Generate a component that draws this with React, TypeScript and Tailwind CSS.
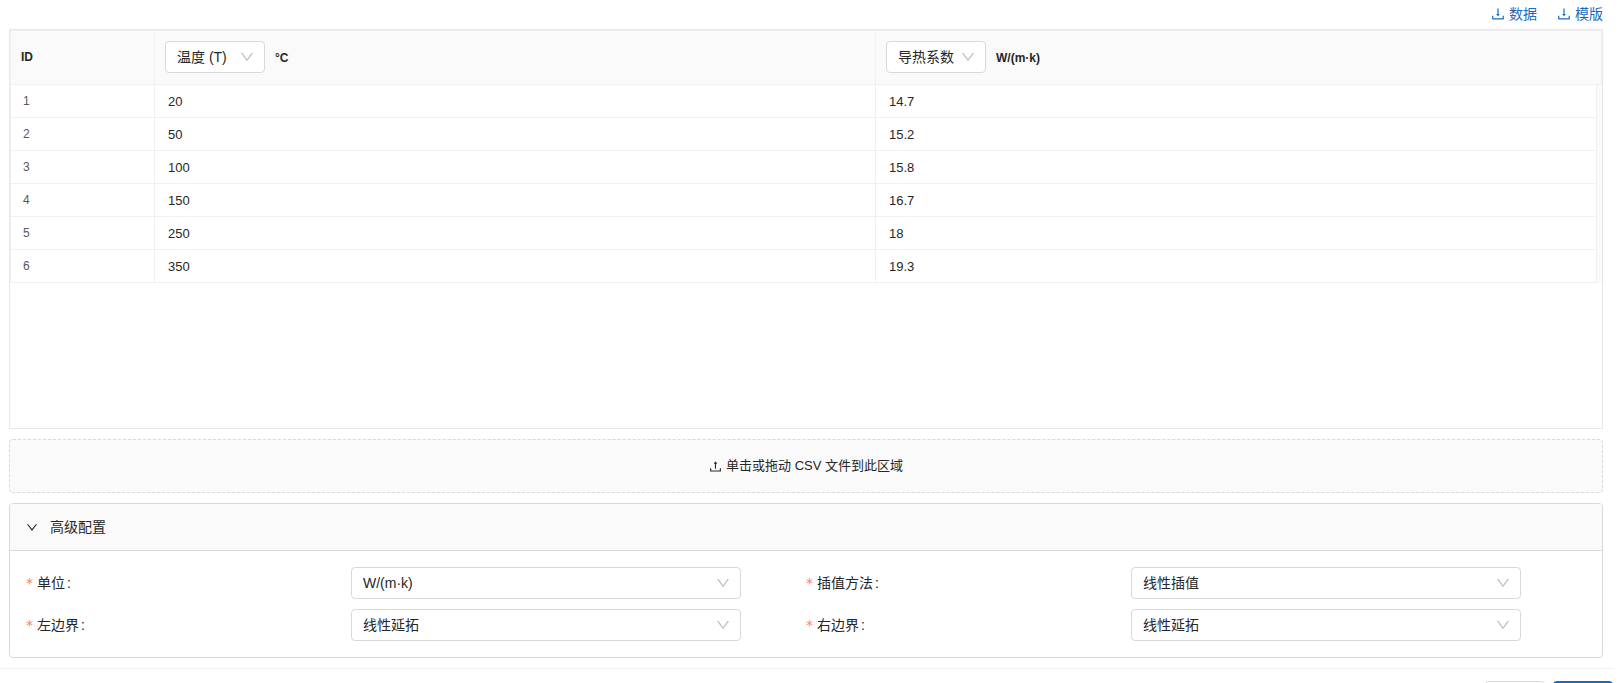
import { useState } from "react";

const DOWN =
  "M884 256h-75c-5.1 0-9.9 2.5-12.9 6.6L512 654.2 227.9 262.6c-3-4.1-7.8-6.6-12.9-6.6h-75c-6.5 0-10.3 7.4-6.5 12.7l352.6 486.1c12.8 17.6 39 17.6 51.7 0l352.6-486.1c3.9-5.3.1-12.7-6.4-12.7z";
const RIGHT =
  "M765.7 486.8L314.9 134.7A7.97 7.97 0 00302 141v77.3c0 4.9 2.3 9.6 6.1 12.6l360 281.1-360 281.1c-3.9 3-6.1 7.7-6.1 12.6V883c0 6.7 7.7 10.4 12.9 6.3l450.8-352.1a31.96 31.96 0 000-50.4z";
const TRAY =
  "M878 626h-60c-4.4 0-8 3.6-8 8v154H214V634c0-4.4-3.6-8-8-8h-60c-4.4 0-8 3.6-8 8v198c0 17.7 14.3 32 32 32h684c17.7 0 32-14.3 32-32V634c0-4.4-3.6-8-8-8z";
const DOWNLOAD =
  "M505.7 661a8 8 0 0012.6 0l112-141.7c4.1-5.2.4-12.9-6.3-12.9h-74.1V168c0-4.4-3.6-8-8-8h-60c-4.4 0-8 3.6-8 8v338.3H400c-6.7 0-10.4 7.7-6.3 12.9l112 141.8z" +
  TRAY;
const UPLOAD =
  "M400 317.7h73.9V656c0 4.4 3.6 8 8 8h60c4.4 0 8-3.6 8-8V317.7H624c6.7 0 10.4-7.7 6.3-12.9L518.3 163a8 8 0 00-12.6 0l-112 141.7c-4.1 5.3-.4 13 6.3 13z" +
  TRAY;

function Icon({ path, className }: { path: string; className: string }) {
  return (
    <svg viewBox="64 64 896 896" fill="currentColor" aria-hidden="true" className={className}>
      <path d={path} />
    </svg>
  );
}

type SelectProps = { id?: string; label?: string; options: string[]; className: string };

function Select({ id, label, options, className }: SelectProps) {
  return (
    <div className={`relative ${className}`}>
      <select
        id={id}
        aria-label={label}
        className="block h-8 w-full cursor-pointer appearance-none rounded border border-[#d9d9d9] bg-white pl-[11px] pr-6 text-sm font-normal text-[#262626] outline-none focus:border-[#1a6bbb]"
      >
        {options.map((o) => (
          <option key={o}>{o}</option>
        ))}
      </select>
      <Icon
        path={DOWN}
        className="pointer-events-none absolute right-[11px] top-[9px] size-[14px] text-[#bfbfbf]"
      />
    </div>
  );
}

const rows = [
  ["20", "14.7"],
  ["50", "15.2"],
  ["100", "15.8"],
  ["150", "16.7"],
  ["250", "18"],
  ["350", "19.3"],
];

const fields = [
  { id: "unit", label: "单位", options: ["W/(m·k)"] },
  { id: "method", label: "插值方法", options: ["线性插值"] },
  { id: "left", label: "左边界", options: ["线性延拓"] },
  { id: "right", label: "右边界", options: ["线性延拓"] },
];

function DownloadLink({ text }: { text: string }) {
  return (
    <a href="#" className="flex items-center gap-1 text-sm text-[#1a6bbb]">
      <Icon path={DOWNLOAD} className="size-[14px]" />
      {text}
    </a>
  );
}

function DataTable() {
  const th = "h-[54px] border-b border-r border-[#f0f0f0] px-[10px] pt-[10px] text-left align-top";
  const td = "h-[33px] border-b border-r border-[#f0f0f0]";
  const value = "p-0 pl-[13px] pt-0.5 text-[13px] text-[#262626]";
  return (
    <div className="h-[400px] overflow-hidden border border-[#e8e8e8]">
      <table className="w-full table-fixed border-separate border-spacing-0 border-t border-[#f0f0f0]">
        <colgroup>
          <col className="w-[145px]" />
          <col />
          <col />
          <col className="w-[5px]" />
        </colgroup>
        <thead className="bg-[#fafafa] text-xs font-bold text-[#262626]">
          <tr>
            <th className={`${th} border-l`}>
              <div className="flex h-8 items-center">ID</div>
            </th>
            <th className={th}>
              <div className="flex h-8 items-center gap-[10px]">
                <Select label="温度 (T)" options={["温度 (T)"]} className="w-[100px]" />
                <span className="pt-0.5">°C</span>
              </div>
            </th>
            <th className={th} colSpan={2}>
              <div className="flex h-8 items-center gap-[10px]">
                <Select label="导热系数" options={["导热系数"]} className="w-[100px]" />
                <span className="pt-0.5">W/(m·k)</span>
              </div>
            </th>
          </tr>
        </thead>
        <tbody>
          {rows.map(([t, k], i) => (
            <tr key={t}>
              <td className={`${td} border-l p-0 pl-3 text-xs text-[#595959]`}>{i + 1}</td>
              <td className={`${td} ${value}`}>{t}</td>
              <td className={`${td} ${value}`}>{k}</td>
              <td className="bg-[#fafafa] p-0" />
            </tr>
          ))}
        </tbody>
      </table>
    </div>
  );
}

export default function App() {
  const [open, setOpen] = useState(true);
  return (
    <div className="h-screen overflow-hidden bg-white font-['Liberation_Sans','Noto_Sans_CJK_SC',sans-serif] text-[#262626]">
      <main className="flex flex-col gap-[10px] pb-[10px] pl-[9px] pr-4">
        <div>
          <div className="mb-px flex h-7 items-center justify-end gap-5">
            <DownloadLink text="数据" />
            <DownloadLink text="模版" />
          </div>
          <DataTable />
        </div>

        <button
          type="button"
          className="flex h-[54px] w-full cursor-pointer items-center justify-center gap-1 rounded border border-dashed border-[#d9d9d9] bg-[#fafafa] text-[13px]"
        >
          <Icon path={UPLOAD} className="size-[13px]" />
          单击或拖动 CSV 文件到此区域
        </button>

        <section className="overflow-hidden rounded border border-[#d9d9d9]">
          <button
            type="button"
            aria-expanded={open}
            onClick={() => setOpen(!open)}
            className="flex h-[46px] w-full cursor-pointer items-center gap-3 bg-[#fafafa] px-4 text-sm"
          >
            <Icon path={RIGHT} className={open ? "size-3 rotate-90" : "size-3"} />
            高级配置
          </button>
          {open && (
            <div className="grid grid-cols-2 gap-y-[10px] border-t border-[#d9d9d9] p-4">
              {fields.map((f) => (
                <div key={f.id} className="flex items-center">
                  <label htmlFor={f.id} className="flex w-5/12 items-center text-sm">
                    <span className="mr-1 w-[7px] font-['DejaVu_Sans',sans-serif] text-[#ff7875]">
                      *
                    </span>
                    {f.label}
                    <span className="ml-[2px]">:</span>
                  </label>
                  <Select id={f.id} options={f.options} className="w-1/2" />
                </div>
              ))}
            </div>
          )}
        </section>
      </main>

      <footer className="mr-[6px] flex justify-end gap-2 border-t border-[#f0f0f0] pt-3">
        <button
          type="button"
          aria-label="取消"
          className="h-8 w-[60px] rounded border border-[#d9d9d9] bg-white"
        />
        <button type="button" aria-label="确定" className="h-8 w-[60px] rounded bg-[#1a6bbb]" />
      </footer>
    </div>
  );
}
